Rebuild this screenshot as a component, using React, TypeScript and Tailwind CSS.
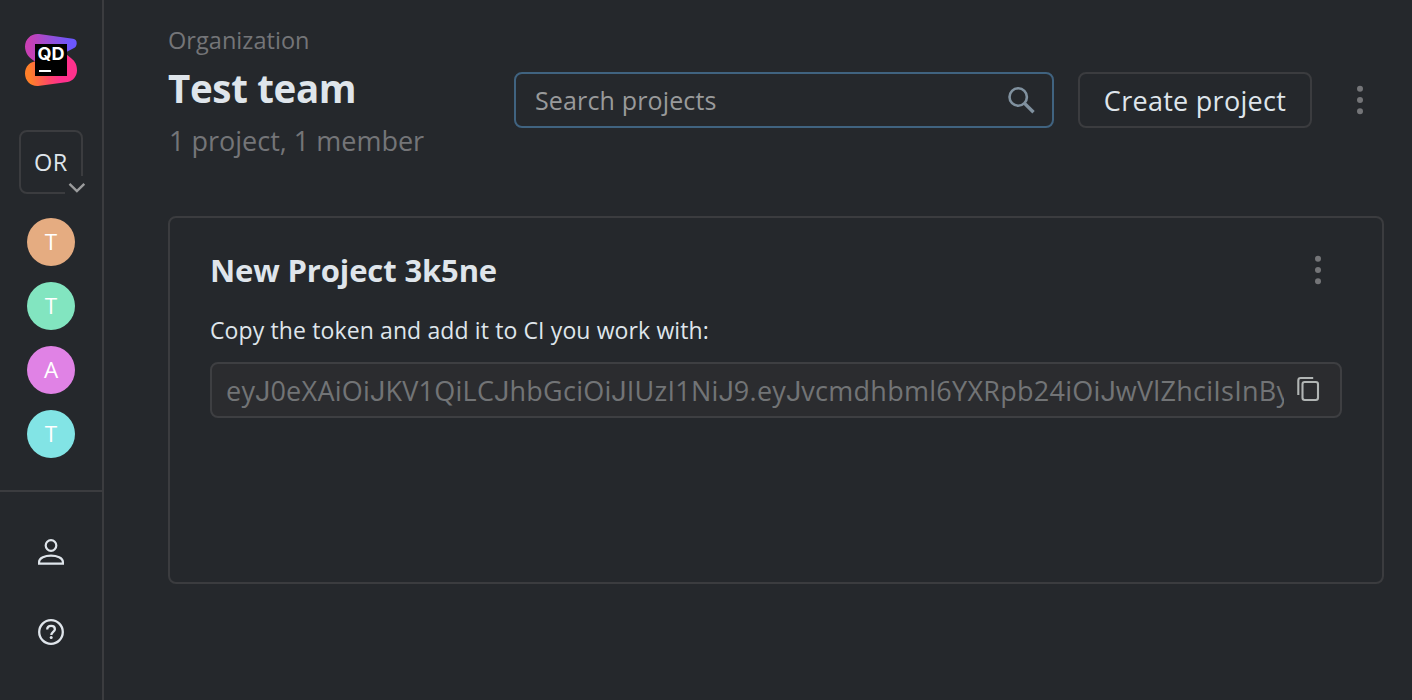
import { Fragment } from "react";

const token = "eyJ0eXAiOiJKV1QiLCJhbGciOiJIUzI1NiJ9.eyJvcmdhbml6YXRpb24iOiJwVlZhciIsInBy";

const organizations = [
  { letter: "T", color: "bg-[#e5ac81]" },
  { letter: "T", color: "bg-[#82e5c0]" },
  { letter: "A", color: "bg-[#e082e5]" },
  { letter: "T", color: "bg-[#82e4e5]" },
];

function Logo() {
  return (
    <svg className="h-[52px] w-[52px]" viewBox="0 0 52 52">
      <defs>
        <linearGradient id="logo-top" x1="0" y1="14" x2="52" y2="8" gradientUnits="userSpaceOnUse">
          <stop offset="0.1" stopColor="#c840b4" />
          <stop offset="0.55" stopColor="#9050dc" />
          <stop offset="0.9" stopColor="#6b57ff" />
        </linearGradient>
        <linearGradient id="logo-bottom" x1="0" y1="42" x2="52" y2="36" gradientUnits="userSpaceOnUse">
          <stop offset="0.1" stopColor="#ff7f2a" />
          <stop offset="0.45" stopColor="#ff4768" />
          <stop offset="0.65" stopColor="#ff318c" />
        </linearGradient>
      </defs>
      <path fill="url(#logo-top)" d="M12.5 0C5.500 0 0 5.500 0 12.500C0 19 4 24 10 27.500L30 24L49.500 13.700C51 12.800 51.700 10.900 51.700 8.900C51.700 6.700 50.200 5.100 48 4.800L14 .1Z" />
      <path fill="url(#logo-bottom)" d="M12 27.300C5 27.300 0 32.700 0 39.500C0 47 5.700 52.300 13 51.900L42.500 47.900C48 47 52 42.200 52 36.500C52 31 50.200 27.500 46.500 24.500L41 20L30 24Z" />
      <path d="M10 10h32v32H10z" />
      <path fill="#fff" d="M14 36h12v2H14z" />
      <text x="12.400" y="26.200" fill="#fff" fontFamily="Inter, sans-serif" fontSize="17" fontWeight="700" textLength="27" lengthAdjust="spacingAndGlyphs">QD</text>
    </svg>
  );
}

function MoreIcon() {
  return (
    <svg className="h-8 w-8 shrink-0 fill-[#747578]" viewBox="0 0 32 32">
      <circle cx="16" cy="4.700" r="3" />
      <circle cx="16" cy="16" r="3" />
      <circle cx="16" cy="27.300" r="3" />
    </svg>
  );
}

function Sidebar() {
  return (
    <aside className="flex w-[104px] shrink-0 flex-col border-r-2 border-[#3b3c3f]">
      <div className="flex h-[490px] flex-col items-center pt-[34px]">
        <Logo />
        <button className="relative mt-11 flex h-16 w-16 items-center justify-center rounded-lg border-2 border-[#3b3c3f] text-[23.500px] leading-8 tracking-[0.500px] text-[#dfe5eb]">
          OR
          <span className="absolute -right-[6px] -bottom-[2px] flex h-[18px] w-[22px] bg-[#25282c]">
            <svg className="h-[18px] w-[22px]" viewBox="0 0 22 18" fill="none" stroke="#9b9c9d" strokeWidth="2.400">
              <path d="m4.500 7.800 7.400 7.200 7.400-7.200" />
            </svg>
          </span>
        </button>
        <div className="mt-6 flex flex-col gap-4">
          {organizations.map((org, i) => (
            <div
              key={i}
              className={`flex h-12 w-12 items-center justify-center rounded-full text-[22.500px] leading-8 text-white ${org.color}`}
            >
              {org.letter}
            </div>
          ))}
        </div>
      </div>
      <div className="flex flex-1 flex-col items-center gap-12 border-t-2 border-[#3b3c3f] pt-11">
        <svg className="h-8 w-8" viewBox="0 0 32 32" fill="none" stroke="#dfe5eb" strokeWidth="2.200">
          <circle cx="16" cy="9.500" r="5.300" />
          <path d="M4.100 27.600v-1.800c0-4 6-6.200 11.900-6.200s11.900 2.200 11.900 6.200v1.800z" />
        </svg>
        <svg className="h-8 w-8" viewBox="0 0 32 32" fill="none" stroke="#dfe5eb" strokeWidth="2.300">
          <circle cx="16" cy="16" r="11.800" />
          <path d="M12.200 13.600c0-2.300 1.600-3.700 3.900-3.700s3.800 1.300 3.800 3.300c0 2.600-3.600 2.900-3.600 5.800" />
          <circle cx="16.200" cy="21.600" r="1.500" fill="#dfe5eb" stroke="none" />
        </svg>
      </div>
    </aside>
  );
}

function Header() {
  return (
    <header className="flex h-[136px]">
      <div className="w-[346px] shrink-0 whitespace-nowrap text-[#747578]">
        <p className="text-[23.500px] leading-8 tracking-[0.050px]">Organization</p>
        <h1 className="mt-2 text-[38.500px] leading-[48px] font-bold tracking-[-0.350px] text-[#dfe5eb]">Test team</h1>
        <p className="mt-[9px] pl-px text-[27px] leading-10">1 project, 1 member</p>
      </div>
      <div className="mt-12 flex h-14 items-center">
        <div className="flex h-14 w-[540px] items-center justify-between rounded-lg border-2 border-[#406380] pr-[15px] pl-[19px]">
          <span className="text-[25px] leading-10 tracking-[0.150px] text-[#999a9b]">Search projects</span>
          <svg className="h-8 w-8" viewBox="0 0 32 32" fill="none" stroke="#80919f" strokeWidth="2.600">
            <circle cx="13.200" cy="13" r="8.700" />
            <path d="m19.300 19.100 9.200 9.200" strokeWidth="3.400" />
          </svg>
        </div>
        <button className="ml-6 h-14 w-[234px] rounded-lg border-2 border-[#3b3c3f] pt-[2px] text-[27px] leading-10 tracking-[0.280px] whitespace-nowrap text-[#dfe5eb]">
          Create project
        </button>
        <button className="ml-8">
          <MoreIcon />
        </button>
      </div>
    </header>
  );
}

function Token() {
  return (
    <span className="w-[1058px] overflow-hidden pt-[2px] text-[27px] leading-10 tracking-[0.270px] whitespace-nowrap text-[#727476]">
      {token.split("J").map((part, i) => (
        <Fragment key={i}>
          {i > 0 && <span className="font-[Roboto] leading-none">J</span>}
          {part}
        </Fragment>
      ))}
    </span>
  );
}

function ProjectCard() {
  return (
    <section className="mt-14 h-[368px] w-[1216px] rounded-lg border-2 border-[#3b3c3f] px-10 pt-8 text-[#dfe5eb]">
      <div className="flex h-10 items-center justify-between pr-2">
        <h2 className="text-[31px] leading-10 font-bold tracking-[-0.140px]">New Project 3k5ne</h2>
        <button>
          <MoreIcon />
        </button>
      </div>
      <p className="mt-6 text-[23px] leading-8 tracking-[0.120px]">Copy the token and add it to CI you work with:</p>
      <div className="mt-4 flex h-14 items-center rounded-lg border-2 border-[#3e3f42] bg-[#2b2c2f] pl-[14px]">
        <Token />
        <svg className="ml-2 h-8 w-8" viewBox="0 0 32 32" fill="none" stroke="#b1b5b4" strokeWidth="2.100">
          <rect x="10.500" y="8" width="15.500" height="18" rx="2.200" />
          <path d="M6.300 21V6.400a2.400 2.400 0 0 1 2.400-2.400h12.500" />
        </svg>
      </div>
    </section>
  );
}

export default function App() {
  return (
    <div className="flex h-[700px] w-[1412px] overflow-hidden bg-[#25282c] font-['Open_Sans','Noto_Sans',sans-serif]">
      <Sidebar />
      <main className="flex-1 pt-6 pl-16">
        <Header />
        <ProjectCard />
      </main>
    </div>
  );
}
